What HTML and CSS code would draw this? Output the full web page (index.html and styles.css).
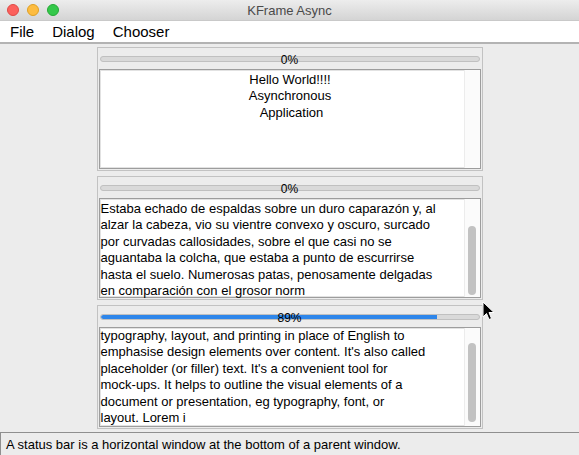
FILE: index.html
```html
<!DOCTYPE html>
<html>
<head>
<meta charset="utf-8">
<title>KFrame Async</title>
<link rel="stylesheet" href="styles.css">
</head>
<body>
<div class="window">
  <header class="titlebar">
    <div class="lights">
      <span class="light red"></span>
      <span class="light yellow"></span>
      <span class="light green"></span>
    </div>
    <div class="title">KFrame Async</div>
    <div></div>
  </header>
  <nav class="menubar">
    <span>File</span>
    <span>Dialog</span>
    <span>Chooser</span>
  </nav>
  <main class="content">
    <section class="panel">
      <div class="progress">
        <div class="track"><div class="fill" style="width:0%"></div></div>
        <span class="label">0%</span>
      </div>
      <div class="textarea">
        <div class="text text-center">Hello World!!!!
Asynchronous
 Application</div>
        <div class="scroll"></div>
      </div>
    </section>
    <section class="panel">
      <div class="progress">
        <div class="track"><div class="fill" style="width:0%"></div></div>
        <span class="label">0%</span>
      </div>
      <div class="textarea">
        <div class="text text-top">Estaba echado de espaldas sobre un duro caparazón y, al
alzar la cabeza, vio su vientre convexo y oscuro, surcado
por curvadas callosidades, sobre el que casi no se
aguantaba la colcha, que estaba a punto de escurrirse
hasta el suelo. Numerosas patas, penosamente delgadas
en comparación con el grosor norm</div>
        <div class="scroll"><div class="thumb thumb-a"></div></div>
      </div>
    </section>
    <section class="panel">
      <div class="progress">
        <div class="track"><div class="fill" style="width:89%"></div></div>
        <span class="label">89%</span>
      </div>
      <div class="textarea">
        <div class="text text-scrolled">typography, layout, and printing in place of English to
emphasise design elements over content. It's also called
placeholder (or filler) text. It's a convenient tool for
mock-ups. It helps to outline the visual elements of a
document or presentation, eg typography, font, or
layout. Lorem i</div>
        <div class="scroll"><div class="thumb thumb-b"></div></div>
      </div>
    </section>
  </main>
  <footer class="statusbar">A status bar is a horizontal window at the bottom of a parent window.</footer>
  <svg class="cursor" width="13" height="20" viewBox="0 0 13 20">
    <path d="M1 1 L1 16 L4.5 12.5 L7 18.5 L9.5 17.5 L7 11.5 L12 11.5 Z" fill="#000" stroke="#fff" stroke-width="1" stroke-linejoin="round"/>
  </svg>
</div>
</body>
</html>
```

FILE: styles.css
```css
html, body {
  margin: 0;
  padding: 0;
}

body {
  width: 579px;
  height: 455px;
  overflow: hidden;
  background: #ececec;
  font-family: "Liberation Sans", Arial, sans-serif;
  color: #000;
}

.window {
  position: relative;
  display: flex;
  flex-direction: column;
  height: 455px;
}

.titlebar {
  height: 20px;
  border-bottom: 1px solid #c9c9c9;
  background: linear-gradient(#ededed, #d4d4d4);
  display: grid;
  grid-template-columns: 1fr auto 1fr;
  align-items: center;
}

.lights {
  display: flex;
  gap: 8px;
  padding-left: 7px;
}

.light {
  width: 12px;
  height: 12px;
  border-radius: 50%;
  box-sizing: border-box;
}

.red { background: #fc605c; border: 1px solid #de4a46; }
.yellow { background: #fdbc40; border: 1px solid #dfa023; }
.green { background: #34c84a; border: 1px solid #25a935; }

.title {
  font-size: 13px;
  color: #4a4a4a;
}

.menubar {
  height: 21px;
  background: #fff;
  border-bottom: 2px solid #b3b3b3;
  display: flex;
  align-items: center;
  gap: 18px;
  padding-left: 10px;
  font-size: 15px;
}

.content {
  flex: 1;
  display: flex;
  flex-direction: column;
  align-items: center;
  gap: 5px;
  padding-top: 3px;
}

.panel {
  width: 382px;
  border: 1px solid #c2c2c2;
  padding: 0 1px 1px;
}

.progress {
  height: 21px;
  display: grid;
  padding: 0 1px;
}

.track,
.label {
  grid-area: 1 / 1;
}

.track {
  align-self: start;
  margin-top: 8px;
  height: 6px;
  box-sizing: border-box;
  border-radius: 3px;
  background: #d9d9d9;
  border: 1px solid #c0c0c0;
  overflow: hidden;
}

.fill {
  height: 100%;
  background: #2e86ea;
  border-radius: 3px 0 0 3px;
}

.label {
  align-self: center;
  justify-self: center;
  font-size: 12px;
  line-height: 12px;
  margin-top: 2px;
}

.textarea {
  height: 100px;
  box-sizing: border-box;
  border: 1px solid #9d9d9d;
  box-shadow: inset 0 0 0 1px #e2e2e2;
  background: #fff;
  display: flex;
}

.text {
  flex: 1;
  font-size: 13px;
  line-height: 16.4px;
  white-space: pre;
  padding-left: 1px;
}

.text-center {
  text-align: center;
  padding-left: 17px;
  padding-top: 2px;
}

.text-top {
  padding-top: 2px;
}

.text-scrolled {
  padding-top: 0;
}

.scroll {
  width: 15px;
  border-left: 1px solid #ececec;
  background: #fbfbfb;
  display: flex;
  justify-content: center;
}

.thumb {
  width: 8px;
  border-radius: 4px;
  background: #c2c2c2;
}

.thumb-a {
  margin-top: 27px;
  height: 69px;
}

.thumb-b {
  margin-top: 15px;
  height: 79px;
}

.statusbar {
  height: 22px;
  border-top: 1px solid #8f8f8f;
  border-left: 1px solid #8f8f8f;
  background: #ececec;
  font-size: 13px;
  line-height: 23px;
  padding-left: 5px;
}

.cursor {
  position: absolute;
  left: 482px;
  top: 301px;
}
```
